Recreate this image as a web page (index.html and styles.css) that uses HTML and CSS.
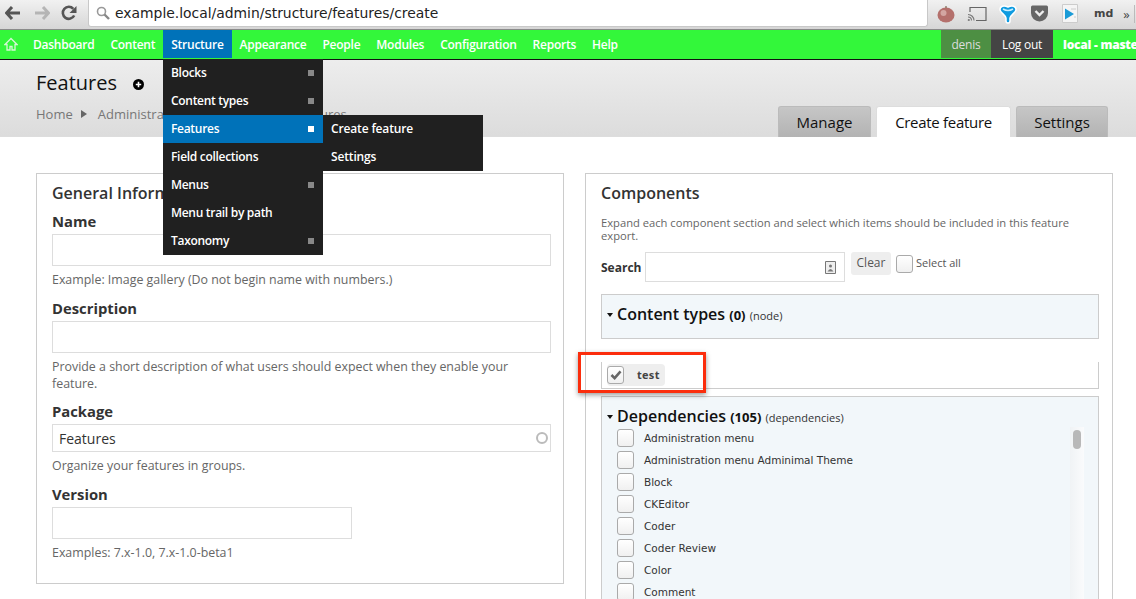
FILE: index.html
```html
<!DOCTYPE html>
<html>
<head lang="en">
    <meta charset="UTF-8">
    <title>Create feature</title>
    <link rel="stylesheet" href="styles.css">
</head>
<body>
<div id="chrome">
    <svg class="nav-icon back" width="16" height="14" viewBox="0 0 16 14"><path d="M7 1 1.500 7 7 13M2 7h13" fill="none" stroke="#555" stroke-width="3"/></svg>
    <svg class="nav-icon forward" width="16" height="14" viewBox="0 0 16 14"><path d="M9 1 14.500 7 9 13M14 7H1" fill="none" stroke="#b5b5b5" stroke-width="3"/></svg>
    <svg class="nav-icon reload" width="16" height="16" viewBox="0 0 16 16"><path d="M13.200 10.500A6 6 0 1 1 12.300 3.800" fill="none" stroke="#555" stroke-width="2.600"/><path d="M15.500 1v7h-7z" fill="#555"/></svg>
    <div id="omnibox">
        <svg width="14" height="14" viewBox="0 0 14 14"><circle cx="5.500" cy="5.500" r="4" fill="none" stroke="#999" stroke-width="1.600"/><path d="M8.500 8.500 13 13" stroke="#888" stroke-width="2.400"/></svg>
        <span>example.local/admin/structure/features/create</span>
    </div>
    <div id="extensions">
        <svg width="18" height="18" viewBox="0 0 18 18"><ellipse cx="9" cy="10" rx="8.500" ry="7.500" fill="#b4706c"/><ellipse cx="6.500" cy="8" rx="3" ry="3" fill="#d3a6a2"/><path d="M9 3V1" stroke="#7a6a50" stroke-width="1.200"/></svg>
        <svg width="20" height="16" viewBox="0 0 20 16"><path d="M3 6V1.500h16v13H9" fill="none" stroke="#666" stroke-width="1.200"/><path d="M1 8.500a6 6 0 0 1 6 6M1 11a3.500 3.500 0 0 1 3.500 3.500" fill="none" stroke="#777" stroke-width="1.100"/><circle cx="1.800" cy="14" r="1.100" fill="#777"/></svg>
        <svg class="ext-vee" width="18" height="20" viewBox="0 0 18 20"><path d="M1 5.500C1 2 5 1 9 3c4-2 8-1 8 2.500 0 3-6 6-6 8.500v3q0 2-2 2t-2-2v-3C7 11.500 1 8.500 1 5.500z" fill="#0f9be0" stroke="#fff" stroke-width="1.500"/><path d="M4 5q5 3 10 0" fill="none" stroke="#c8eeff" stroke-width="1.500"/></svg>
        <svg class="ext-pocket" width="19" height="17" viewBox="0 0 19 17"><path d="M1 2q0-1.500 1.500-1.500h14Q18 .5 18 2v6a8.500 8.500 0 0 1-17 0z" fill="#666"/><path d="M5.500 6 9.500 10l4-4" fill="none" stroke="#eee" stroke-width="2.400"/></svg>
        <svg width="16" height="19" viewBox="0 0 16 19"><path d="M.5.500h15v18H.5z" fill="#f5f5f5" stroke="#ccc"/><path d="M3 4.500 12 10l-9 5.500z" fill="#1a9bd7"/><path d="M9 5h5M12 13h2" stroke="#ccc"/></svg>
        <b class="ext-md">md</b>
        <span class="ext-more">»</span>
    </div>
</div>

<div id="toolbar">
    <a class="home" href="#"><svg width="14" height="14" viewBox="0 0 14 14"><path d="M7 1.500 1 7.500h2v5.500h3V9.500h2V13h3V7.500h2z" fill="none" stroke="#d5f7d5" stroke-width="1.300"/></svg></a>
    <a href="#">Dashboard</a>
    <a href="#">Content</a>
    <a class="active" href="#">Structure</a>
    <a href="#">Appearance</a>
    <a href="#">People</a>
    <a href="#">Modules</a>
    <a href="#">Configuration</a>
    <a href="#">Reports</a>
    <a href="#">Help</a>
    <div class="user">
        <a class="user-name" href="#">denis</a>
        <a class="logout" href="#">Log out</a>
        <b class="env">local - master</b>
    </div>
</div>

<div id="header">
    <div class="header-left">
        <h1>Features <svg width="11" height="11" viewBox="0 0 11 11"><circle cx="5.500" cy="5.500" r="5.500"/><path d="M5.500 2.800v5.400M2.800 5.500h5.400" stroke="#fff" stroke-width="1.600"/></svg></h1>
        <div class="crumbs">Home<i></i>Administration<i></i>Structure<i></i>Features</div>
    </div>
    <ul class="tabs">
        <li>Manage</li>
        <li class="select">Create feature</li>
        <li class="last">Settings</li>
    </ul>
</div>

<div id="main">
    <div class="box">
        <h2>General Information</h2>
        <div class="item">
            <label>Name</label>
            <input type="text">
            <p class="help">Example: Image gallery (Do not begin name with numbers.)</p>
        </div>
        <div class="item item-long">
            <label>Description</label>
            <input type="text">
            <p class="help">Provide a short description of what users should expect when they enable your feature.</p>
        </div>
        <div class="item">
            <label>Package</label>
            <div class="package">Features<span class="throbber"></span></div>
            <p class="help">Organize your features in groups.</p>
        </div>
        <div class="item">
            <label>Version</label>
            <input class="short" type="text">
            <p class="help">Examples: 7.x-1.0, 7.x-1.0-beta1</p>
        </div>
    </div>

    <div class="box">
        <h2>Components</h2>
        <p class="intro">Expand each component section and select which items should be included in this feature export.</p>
        <div class="search">
            <b>Search</b>
            <div class="search-input">
                <svg width="11" height="13" viewBox="0 0 11 13"><path d="M.5.500h10v12H.5z" fill="#eee" stroke="#777"/><circle cx="5.500" cy="5" r="1.500" fill="#777"/><path d="M2.500 10.500q3-5 6 0z" fill="#777"/></svg>
            </div>
            <span class="clear">Clear</span>
            <span class="check"></span>
            <span class="select-all">Select all</span>
        </div>

        <div class="group group-first">
            <h3><i class="caret"></i>Content types <b>(0)</b> <small>(node)</small></h3>
        </div>
        <div class="picked">
            <span class="chip"><span class="check checked">
                <svg width="12" height="10" viewBox="0 0 13 11"><path d="M1.500 5.500 5 9l6.500-7.500" fill="none" stroke="#666" stroke-width="2.800"/></svg>
            </span><b>test</b></span>
        </div>
        <div class="group group-deps">
            <h3><i class="caret"></i>Dependencies <b>(105)</b> <small>(dependencies)</small></h3>
            <div class="list">
                <ul>
                    <li><span class="check"></span>Administration menu</li>
                    <li><span class="check"></span>Administration menu Adminimal Theme</li>
                    <li><span class="check"></span>Block</li>
                    <li><span class="check"></span>CKEditor</li>
                    <li><span class="check"></span>Coder</li>
                    <li><span class="check"></span>Coder Review</li>
                    <li><span class="check"></span>Color</li>
                    <li><span class="check"></span>Comment</li>
                </ul>
                <div class="scroll"><span></span></div>
            </div>
        </div>
    </div>
</div>

<!-- open dropdown and the red note lie over the page -->
<ul id="dropdown">
    <li class="more">Blocks</li>
    <li class="more">Content types</li>
    <li class="more current">Features
        <ul id="submenu">
            <li>Create feature</li>
            <li>Settings</li>
        </ul>
    </li>
    <li>Field collections</li>
    <li class="more">Menus</li>
    <li>Menu trail by path</li>
    <li class="more">Taxonomy</li>
</ul>
<div id="note"></div>
</body>
</html>
```

FILE: styles.css
```css
*{
    margin: 0;
    padding: 0;
    list-style: none;
    box-sizing: border-box;
}
html,body{
    height: 599px;
    overflow: hidden;
}
body{
    position: relative;
    background: #fff;
    color: #333;
    font-family: "Open Sans", sans-serif;
}
a{
    text-decoration: none;
    color: #fff;
}

/* browser bar */
#chrome{
    height: 30px;
    display: flex;
    align-items: flex-start;
    padding-left: 5px;
    background: linear-gradient(#f1f1f1, #d6d6d6);
    border-bottom: 1px solid #8a8a8a;
}
.nav-icon{
    flex: none;
    margin-top: 6px;
}
.back{
    margin-right: 13px;
}
.forward{
    margin-right: 11px;
    margin-top: 6px;
}
.reload{
    margin-top: 5px;
    margin-right: 11px;
}
#omnibox{
    width: 840px;
    height: 27px;
    display: flex;
    align-items: center;
    gap: 5px;
    padding-left: 7px;
    background: #fff;
    border: 1px solid #c8c8c8;
    border-top: none;
    border-radius: 0 0 3px 3px;
    color: #222;
    font-family: "DejaVu Sans", sans-serif;
    font-size: 13.900px;
}
#extensions{
    flex: 1;
    display: flex;
    align-items: center;
    height: 27px;
    padding-left: 9px;
    gap: 12px;
}
.ext-pocket{
    margin-left: 1px;
}
.ext-pocket + svg{
    margin-left: 1px;
}
.ext-md{
    margin-left: 4px;
    font-family: "DejaVu Sans", sans-serif;
    font-size: 11px;
    color: #444;
}
.ext-more{
    margin-left: -2px;
    font-size: 13px;
    color: #444;
    border-right: 1px solid #bbb;
    padding-right: 4px;
}

/* admin toolbar */
#toolbar{
    height: 30px;
    display: flex;
    align-items: stretch;
    padding-bottom: 1px;
    background: #33f73a;
    border-bottom: 1px solid #111;
    font-size: 12px;
    font-weight: 600;
    letter-spacing: -.25px;
    line-height: 29px;
    white-space: nowrap;
    overflow: hidden;
}
#toolbar a{
    padding: 0 8px;
}
#toolbar .home{
    width: 25px;
    padding: 0 0 0 4px;
    display: flex;
    align-items: center;
}
#toolbar .active{
    background: #0072b9;
}
.user{
    margin-left: auto;
    width: 195px;
    flex: none;
    display: flex;
    overflow: hidden;
}
#toolbar .user-name{
    flex: none;
    width: 50px;
    padding: 0;
    background: #4d8f43;
    color: #ddd;
    font-weight: 400;
    text-align: center;
}
#toolbar .logout{
    flex: none;
    width: 62px;
    padding: 0;
    background: #444;
    font-weight: 400;
    text-align: center;
}
.env{
    padding-left: 10px;
    color: #fff;
}

/* page title */
#header{
    height: 77px;
    display: flex;
    justify-content: space-between;
    padding: 0 28px 0 36px;
    background: linear-gradient(#ededed, #dcdcdc);
    border-bottom: 1px solid #ddd;
}
h1{
    margin-top: 9px;
    font-size: 20px;
    font-weight: 400;
    line-height: 27px;
    color: #111;
}
h1 svg{
    margin-left: 11px;
}
.crumbs{
    margin-top: 9px;
    font-size: 13px;
    line-height: 18px;
    color: #777;
    white-space: nowrap;
}
.crumbs i{
    display: inline-block;
    margin: 0 11px 1px 8px;
    border-left: 6px solid #666;
    border-top: 4px solid transparent;
    border-bottom: 4px solid transparent;
}
.tabs{
    display: flex;
    align-items: flex-end;
    gap: 5px;
}
.tabs li{
    height: 31px;
    width: 93px;
    margin-bottom: -1px;
    background: linear-gradient(#c6c6c6, #b3b3b3);
    border: 1px solid #bbb;
    border-bottom: none;
    border-radius: 3px 3px 0 0;
    color: #111;
    font-size: 15px;
    line-height: 30px;
    text-align: center;
}
.tabs li.select{
    width: 135px;
    background: #fff;
    border-color: #ddd;
    letter-spacing: -.3px;
}
.tabs li.last{
    width: 92px;
}

/* two columns */
#main{
    display: grid;
    grid-template-columns: 528px 528px;
    gap: 21px;
    padding: 36px 0 0 36px;
}
.box{
    height: 411px;
    padding: 9px 12px 0 15px;
    border: 1px solid #ccc;
}
.box + .box{
    height: 440px;
}
h2{
    font-size: 16px;
    font-weight: 600;
    line-height: 20px;
    color: #333;
}
.item{
    margin-top: 9px;
    margin-bottom: 11px;
}
.item + .item{
    margin-top: 0;
}
.item-long{
    margin-bottom: 10px;
}
label{
    display: block;
    margin-bottom: 2px;
    font-size: 14.800px;
    font-weight: 700;
    line-height: 19px;
    padding-bottom: 1px;
}
input{
    display: block;
    width: 499px;
    height: 32px;
    border: 1px solid #ddd;
    background: #fff;
}
input.short{
    width: 300px;
}
.package{
    height: 28px;
    display: flex;
    align-items: center;
    justify-content: space-between;
    padding: 0 2px 0 6px;
    border: 1px solid #ddd;
    font-size: 14px;
    color: #333;
}
.throbber{
    width: 12px;
    height: 12px;
    border: 2px solid #bbb;
    border-radius: 50%;
}
.help{
    margin-top: 5px;
    font-size: 12.400px;
    line-height: 17px;
    color: #666;
}

/* components */
.intro{
    margin-top: 13px;
    font-size: 11.200px;
    line-height: 13px;
    color: #666;
}
.search{
    display: flex;
    align-items: flex-start;
    margin-top: 10px;
    height: 31px;
}
.search b{
    width: 44px;
    margin-top: 8px;
    font-size: 12px;
    line-height: 16px;
}
.search-input{
    width: 200px;
    height: 30px;
    display: flex;
    align-items: center;
    justify-content: flex-end;
    padding-right: 8px;
    border: 1px solid #ddd;
}
.clear{
    width: 40px;
    height: 23px;
    margin: 0 5px 0 6px;
    background: #eee;
    border-radius: 3px;
    color: #555;
    font-size: 12px;
    line-height: 21px;
    text-align: center;
}
.check{
    flex: none;
    display: inline-flex;
    align-items: center;
    justify-content: center;
    width: 17px;
    height: 18px;
    background: linear-gradient(#fff, #f0f0f0);
    border: 1px solid #aaa;
    border-radius: 3px;
}
.search .check{
    margin-top: 3px;
}
.select-all{
    margin: 3px 0 0 3px;
    font-size: 11px;
    line-height: 16px;
    color: #555;
}
.group{
    width: 498px;
    background: #f2f7fa;
    border: 1px solid #ccc;
}
.group-first{
    height: 45px;
    margin-top: 11px;
    padding: 8px 0 0 5px;
}
.group-deps{
    height: 220px;
    margin-top: 7px;
    padding: 8px 0 0 5px;
}
.group-deps h3{
    margin-bottom: -2px;
}
h3{
    font-size: 16px;
    font-weight: 600;
    line-height: 22px;
    color: #111;
    white-space: nowrap;
}
h3 b{
    font-size: 13px;
    font-weight: 700;
}
h3 small{
    font-size: 11px;
    font-weight: 400;
    color: #333;
}
.caret{
    display: inline-block;
    margin: 0 4px 2px 0;
    vertical-align: middle;
    border-top: 4px solid #111;
    border-left: 3.500px solid transparent;
    border-right: 3.500px solid transparent;
}
.picked{
    display: flex;
    width: 498px;
    height: 27px;
    margin-top: 23px;
    padding: 2px 0 0 5px;
    border: 1px solid #ccc;
    border-top: none;
}
.chip{
    display: flex;
    align-items: center;
    width: 58px;
    height: 22px;
    background: #eee;
    border-radius: 4px;
}
.chip b{
    margin: -1px 0 0 13px;
    font-size: 11px;
    font-weight: 700;
    color: #444;
    letter-spacing: .3px;
}
.list{
    display: flex;
    justify-content: space-between;
    margin-left: -5px;
}
.list ul{
    padding-left: 15px;
}
.list li{
    display: flex;
    align-items: center;
    height: 22px;
    font-family: "DejaVu Sans", sans-serif;
    font-size: 10.500px;
    color: #333;
    white-space: nowrap;
}
.list li .check{
    margin-right: 10px;
}
.scroll{
    width: 14px;
    height: 175px;
    margin-right: 14px;
    padding: 3px 0 0 3px;
    background: linear-gradient(90deg, #f0f3f5, #fafbfc);
}
.scroll span{
    display: block;
    width: 8px;
    height: 19px;
    background: #b8b8b8;
    border-radius: 4px;
}

/* open menu */
#dropdown{
    position: absolute;
    left: 163px;
    top: 59px;
    width: 160px;
    background: #202020;
    color: #fff;
    font-size: 12px;
    font-weight: 600;
    letter-spacing: -.3px;
    line-height: 28px;
}
#dropdown li{
    position: relative;
    height: 28px;
    padding-left: 8px;
}
#dropdown .more::after{
    content: "";
    position: absolute;
    right: 9px;
    top: 11px;
    width: 6px;
    height: 6px;
    background: #888;
}
#dropdown .current{
    background: #0072b9;
}
#dropdown .current::after{
    background: #fff;
}
#submenu{
    position: absolute;
    left: 160px;
    top: 0;
    width: 160px;
    background: #202020;
    letter-spacing: -.15px;
}
#note{
    position: absolute;
    left: 578px;
    top: 352px;
    width: 128px;
    height: 41px;
    border: 3px solid #fb2d0c;
    box-shadow: 0 2px 5px rgba(0,0,0,.4);
}
```
